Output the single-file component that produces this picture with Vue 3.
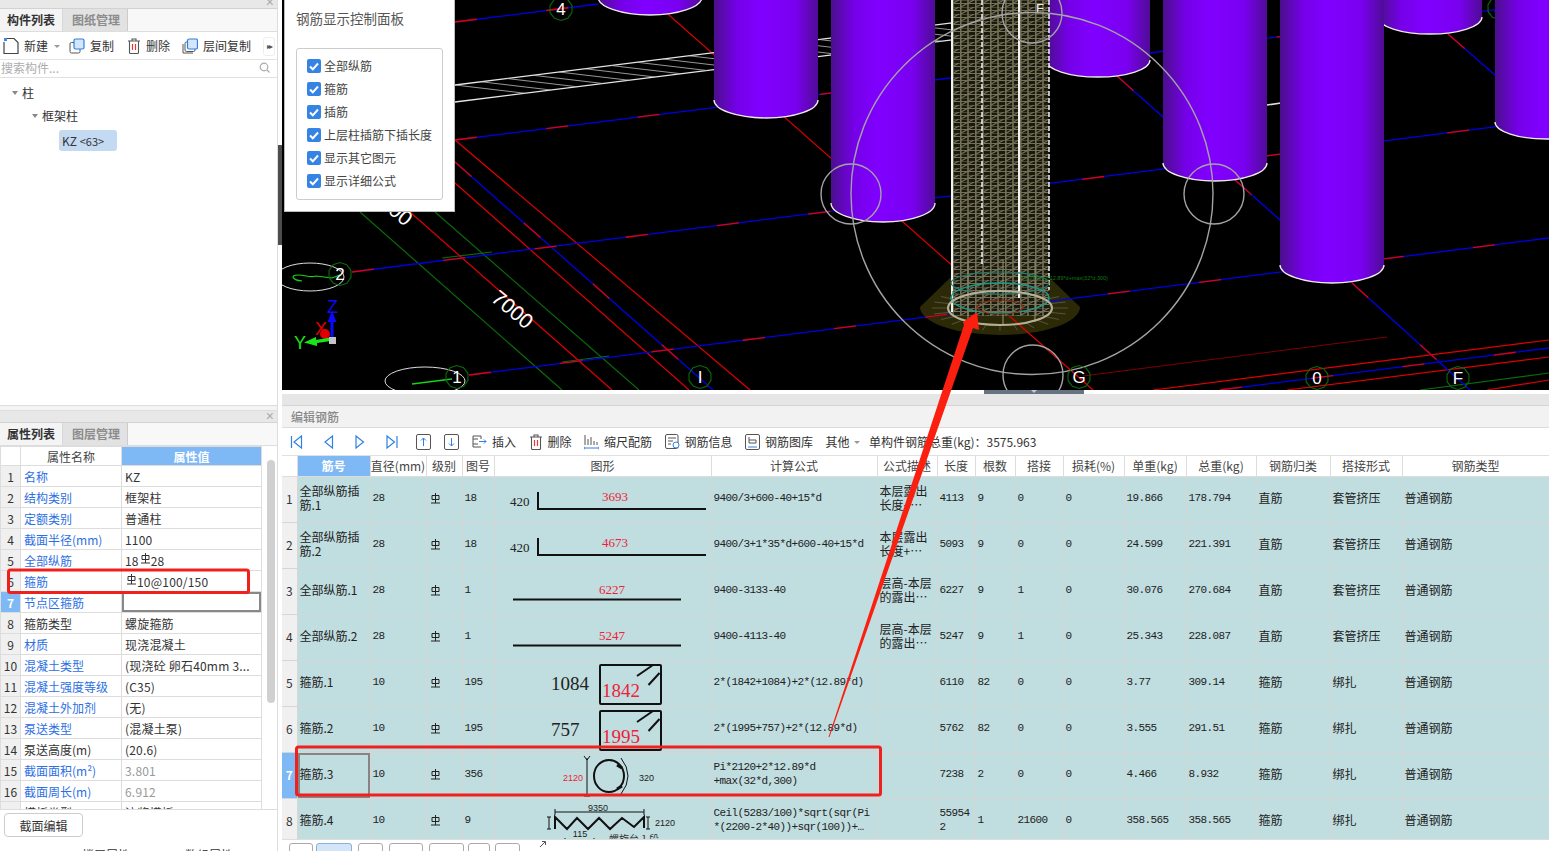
<script setup>
// GCL rebar view: component tree + properties on the left, 3D view + rebar table on the right.
const slope = -0.125;

const mixedLines = [
  [455, 22, 598, 4],
  [455, 140, 1549, 3],
  [352, 272, 1549, 120],
  [469, 375, 1549, 238],
  [1220, 390, 1549, 348],
  [455, 162, 713, 390],
  [1117, 76, 1163, 117],
  [1235, 180, 1280, 220],
  [1352, 283, 1470, 390],
  [1448, 34, 1495, 75],
];
const redLines = [
  [652, 0, 1093, 390],
  [455, 140, 750, 390],
  [455, 183, 689, 390],
  [410, 212, 612, 390],
  [1153, 390, 1549, 340],
  [1287, 390, 1549, 357],
  [1487, 390, 1549, 380],
];
const greenLines = [
  [360, 212, 562, 390],
  [435, 212, 639, 390],
  [1420, 390, 1549, 373],
  [442, 258, 492, 252],
  [562, 362, 609, 356],
];

// hatch between the two slab edges
const slabUpper = (x) => 85 + slope * (x - 455);
const slabLower = (x) => 102 + slope * (x - 455);
const slabHatch = [];
for (let x = 455; x < 1000; x += 26) {
  slabHatch.push([x, slabUpper(x), x + 70, slabLower(x + 70)]);
}

// rear columns first so the nearer ones cover them
const columns = [
  { cx: 650, cy: -3, ry: 18 },
  { cx: 766, cy: 100, ry: 18 },
  { cx: 883, cy: 203, ry: 19 },
  { cx: 1098, cy: 60, ry: 17 },
  { cx: 1430, cy: 17, ry: 17 },
  { cx: 1215, cy: 163, ry: 18 },
  { cx: 1332, cy: 265, ry: 18 },
  { cx: 1547, cy: 122, ry: 17 },
];
const columnPath = (c) =>
  `M${c.cx - 52} -30V${c.cy}A52 ${c.ry} 0 0 0 ${c.cx + 52} ${c.cy}V-30Z`;
const columnEdge = (c) =>
  `M${c.cx - 52} ${c.cy}A52 ${c.ry} 0 0 0 ${c.cx + 52} ${c.cy}`;

function decagon(cx, cy, r) {
  const pts = [];
  for (let i = 0; i < 10; i++) {
    const a = (Math.PI * 2 * i) / 10 + 0.3;
    pts.push(`${(cx + r * Math.cos(a)).toFixed(1)},${(cy + r * Math.sin(a)).toFixed(1)}`);
  }
  return pts.join(" ");
}
const bubbles = [
  { t: "4", x: 561, y: 9 },
  { t: "2", x: 340, y: 274 },
  { t: "1", x: 457, y: 377 },
  { t: "I", x: 700, y: 377 },
  { t: "G", x: 1079, y: 377 },
  { t: "0", x: 1317, y: 378 },
  { t: "F", x: 1458, y: 378 },
];
const radials = [];
for (let i = 0; i < 24; i++) {
  const a = (Math.PI * 2 * i) / 24;
  radials.push([
    1000 + 52 * Math.cos(a),
    308 + 17 * Math.sin(a),
    1000 + 68 * Math.cos(a),
    308 + 23 * Math.sin(a),
  ]);
}

const checks = ["全部纵筋", "箍筋", "插筋", "上层柱插筋下插长度", "显示其它图元", "显示详细公式"];

const props = [
  { name: "名称", value: "KZ", link: true },
  { name: "结构类别", value: "框架柱", link: true },
  { name: "定额类别", value: "普通柱", link: true },
  { name: "截面半径(mm)", value: "1100", link: true },
  { name: "全部纵筋", pre: "18", grade: true, value: "28", link: true },
  { name: "箍筋", grade: true, value: "10@100/150", link: true },
  { name: "节点区箍筋", value: "", link: true, active: true },
  { name: "箍筋类型", value: "螺旋箍筋" },
  { name: "材质", value: "现浇混凝土", link: true },
  { name: "混凝土类型", value: "(现浇砼 卵石40mm 3...", link: true },
  { name: "混凝土强度等级", value: "(C35)", link: true },
  { name: "混凝土外加剂", value: "(无)", link: true },
  { name: "泵送类型", value: "(混凝土泵)", link: true },
  { name: "泵送高度(m)", value: "(20.6)" },
  { name: "截面面积(m²)", value: "3.801", link: true, muted: true },
  { name: "截面周长(m)", value: "6.912", link: true, muted: true },
  { name: "模板类型", value: "流浆模板" },
];

const heads = ["直径(mm)", "级别", "图号", "图形", "计算公式", "公式描述", "长度", "根数", "搭接", "损耗(%)", "单重(kg)", "总重(kg)", "钢筋归类", "搭接形式", "钢筋类型"];
const colWidths = [15, 73, 56, 36, 32, 217, 166, 60, 38, 40, 48, 61, 62, 70, 74, 72, 147];

const bars = [
  { name: "全部纵筋插筋.1", d: 28, fig: 18, shape: "hook", dim: "420", red: "3693", formula: ["9400/3+600-40+15*d"], desc: ["本层露出", "长度+…"], len: 4113, n: 9, lap: 0, unit: "19.866", total: "178.794", cat: "直筋", join: "套管挤压" },
  { name: "全部纵筋插筋.2", d: 28, fig: 18, shape: "hook", dim: "420", red: "4673", formula: ["9400/3+1*35*d+600-40+15*d"], desc: ["本层露出", "长度+…"], len: 5093, n: 9, lap: 0, unit: "24.599", total: "221.391", cat: "直筋", join: "套管挤压" },
  { name: "全部纵筋.1", d: 28, fig: 1, shape: "line", red: "6227", formula: ["9400-3133-40"], desc: ["层高-本层", "的露出…"], len: 6227, n: 9, lap: 1, unit: "30.076", total: "270.684", cat: "直筋", join: "套管挤压" },
  { name: "全部纵筋.2", d: 28, fig: 1, shape: "line", red: "5247", formula: ["9400-4113-40"], desc: ["层高-本层", "的露出…"], len: 5247, n: 9, lap: 1, unit: "25.343", total: "228.087", cat: "直筋", join: "套管挤压" },
  { name: "箍筋.1", d: 10, fig: 195, shape: "stirrup", dim: "1084", red: "1842", formula: ["2*(1842+1084)+2*(12.89*d)"], desc: [], len: 6110, n: 82, lap: 0, unit: "3.77", total: "309.14", cat: "箍筋", join: "绑扎" },
  { name: "箍筋.2", d: 10, fig: 195, shape: "stirrup", dim: "757", red: "1995", formula: ["2*(1995+757)+2*(12.89*d)"], desc: [], len: 5762, n: 82, lap: 0, unit: "3.555", total: "291.51", cat: "箍筋", join: "绑扎" },
  { name: "箍筋.3", d: 10, fig: 356, shape: "spiral", formula: ["Pi*2120+2*12.89*d", "+max(32*d,300)"], desc: [], len: 7238, n: 2, lap: 0, unit: "4.466", total: "8.932", cat: "箍筋", join: "绑扎", active: true },
  { name: "箍筋.4", d: 10, fig: 9, shape: "zigzag", formula: ["Ceil(5283/100)*sqrt(sqr(Pi", "*(2200-2*40))+sqr(100))+…"], desc: [], len: 559542, n: 1, lap: 21600, unit: "358.565", total: "358.565", cat: "箍筋", join: "绑扎" },
];
</script>

<template>
  <div class="app">
    <aside class="side">
      <section class="panel tree-panel">
        <div class="strip"><span class="close">×</span></div>
        <div class="tabs">
          <span class="tab on">构件列表</span>
          <span class="tab">图纸管理</span>
        </div>
        <div class="side-tools">
          <span class="st st-new">
            <svg width="16" height="18" viewBox="0 0 16 18"><path d="M1 5V16.5H15V5.5L11 1.5H4" fill="#fff" stroke="#444" stroke-width="1.2" /><path d="M1 1h3v3H1z" fill="#3a8be8" /></svg>
            新建<i class="caret"></i>
          </span>
          <span class="st st-copy">
            <svg width="16" height="16" viewBox="0 0 16 16"><rect x="1" y="4.5" width="10" height="10.5" rx="1.5" fill="#fff" stroke="#555" /><rect x="5" y="1" width="10" height="10" rx="1.5" fill="#d3e6fb" stroke="#2f80e0" stroke-width="1.2" /></svg>
            复制
          </span>
          <span class="st st-del">
            <svg width="14" height="16" viewBox="0 0 14 16"><path d="M1 3h12M5 3V1h4v2M2.5 3v11.5a1 1 0 0 0 1 1h7a1 1 0 0 0 1-1V3" fill="none" stroke="#555" stroke-width="1.1" /><path d="M5.5 6v6M8.5 6v6" stroke="#e33" stroke-width="1.2" /></svg>
            删除
          </span>
          <span class="st st-floor">
            <svg width="16" height="16" viewBox="0 0 16 16"><path d="M1 6v9h10" fill="none" stroke="#555" /><rect x="3" y="4" width="10" height="9.5" rx="1.5" fill="#fff" stroke="#555" /><rect x="5.5" y="1" width="10" height="10" rx="1.5" fill="#d3e6fb" stroke="#2f80e0" stroke-width="1.2" /></svg>
            层间复制
          </span>
          <span class="more">▸▸</span>
        </div>
        <div class="search">
          <span>搜索构件...</span>
          <svg width="11" height="11" viewBox="0 0 11 11"><circle cx="5" cy="5" r="3.8" fill="none" stroke="#aaa" stroke-width="1.2" /><path d="M8 8l2.5 2.5" stroke="#aaa" stroke-width="1.2" /></svg>
        </div>
        <div class="tree">
          <div class="node lv1"><i class="tri"></i>柱</div>
          <div class="node lv2"><i class="tri"></i>框架柱</div>
          <div class="pill">KZ <small>&lt;63&gt;</small></div>
        </div>
      </section>

      <div class="side-gap"></div>

      <section class="panel prop-panel">
        <div class="strip"><span class="close">×</span></div>
        <div class="tabs">
          <span class="tab on">属性列表</span>
          <span class="tab">图层管理</span>
        </div>
        <div class="prop-body">
          <table class="prop-table">
            <colgroup><col class="c-i" /><col class="c-n" /><col class="c-v" /></colgroup>
            <thead>
              <tr><th></th><th>属性名称</th><th class="blue">属性值</th></tr>
            </thead>
            <tbody>
              <tr v-for="(p, i) in props" :key="p.name">
                <td class="idx" :class="{ act: p.active }">{{ i + 1 }}</td>
                <td class="pname" :class="{ link: p.link }">{{ p.name }}</td>
                <td class="pval" :class="{ muted: p.muted, editing: p.active }">
                  {{ p.pre }}<svg v-if="p.grade" class="grade up" viewBox="0 0 9 11"><path d="M1 2.5h7v4H1zM4.5 0v10M0 10h9" fill="none" stroke="currentColor" stroke-width="1" /></svg>{{ p.value }}
                </td>
              </tr>
            </tbody>
          </table>
          <div class="scroll"><div class="thumb"></div></div>
        </div>
        <div class="prop-foot">
          <button class="edit-btn">截面编辑</button>
          <div class="clipped"><span>楼层属性</span><span>数组属性</span></div>
        </div>
      </section>
    </aside>

    <div class="sash"><div class="sash-thumb"></div></div>

    <main class="main">
      <div class="view">
        <svg class="scene" viewBox="282 0 1267 390" width="1267" height="390">
          <defs>
            <linearGradient id="cyl" x1="0" x2="1" y1="0" y2="0">
              <stop offset="0" stop-color="#4a0f8c" />
              <stop offset="0.22" stop-color="#7500e8" />
              <stop offset="0.45" stop-color="#8000ff" />
              <stop offset="0.78" stop-color="#7a00f0" />
              <stop offset="1" stop-color="#4f0c96" />
            </linearGradient>
            <pattern id="cage" width="15" height="7" patternUnits="userSpaceOnUse">
              <rect width="15" height="7" fill="#1a190f" />
              <path d="M0 0h15M0 3.5h15" stroke="#757156" stroke-width="1" />
              <path d="M1 7L14 0" stroke="#757156" stroke-width="1.2" />
              <path d="M0.8 0v7M8 0v7" stroke="#757156" stroke-width="1.6" />
            </pattern>
          </defs>

          <path d="M950 278H1050L1080 307A80 28 0 0 1 920 307Z" fill="#2c2a06" />

          <line v-for="(l, i) in greenLines" :key="'g' + i" :x1="l[0]" :y1="l[1]" :x2="l[2]" :y2="l[3]" stroke="#0a6b0a" stroke-width="1.2" />
          <line v-for="(l, i) in redLines" :key="'r' + i" :x1="l[0]" :y1="l[1]" :x2="l[2]" :y2="l[3]" stroke="#e00000" stroke-width="1.2" />
          <line x1="1083" y1="376" x2="1387" y2="337" stroke="#7a0000" stroke-width="1.2" />
          <line v-for="(l, i) in mixedLines" :key="'b' + i" :x1="l[0]" :y1="l[1]" :x2="l[2]" :y2="l[3]" stroke="#0000e6" stroke-width="1.3" />
          <line v-for="(l, i) in mixedLines" :key="'m' + i" :x1="l[0]" :y1="l[1]" :x2="l[2]" :y2="l[3]" stroke="#e00000" stroke-width="1.3" stroke-dasharray="22 70" />

          <line x1="455" :y1="slabUpper(455)" x2="1050" :y2="slabUpper(1050)" stroke="#e6e6e6" stroke-width="1.4" />
          <line x1="455" :y1="slabLower(455)" x2="1050" :y2="slabLower(1050)" stroke="#e6e6e6" stroke-width="1.4" />
          <line v-for="(l, i) in slabHatch" :key="'h' + i" :x1="l[0]" :y1="l[1]" :x2="l[2]" :y2="l[3]" stroke="#bdbdbd" stroke-width="0.8" />
          <line x1="1267" y1="105" x2="1281" y2="103" stroke="#ddd" stroke-width="1.6" />

          <!-- this bubble sits behind the far right column -->
          <polygon :points="decagon(1499, 8, 11.5)" fill="none" stroke="#0b6b0b" stroke-width="1.1" />
          <text x="1499" y="14" class="bubble">3</text>

          <g v-for="(c, i) in columns" :key="'c' + i">
            <path :d="columnPath(c)" fill="url(#cyl)" />
            <path :d="columnEdge(c)" fill="none" stroke="#eee" stroke-width="1.3" />
          </g>

          <rect x="952" y="-2" width="97" height="318" fill="url(#cage)" />
          <path d="M952 0V312M1019 0V298" stroke="#f2f2f2" stroke-width="2" />
          <path d="M982 0V264M1049 0V290" stroke="#f2f2f2" stroke-width="1.5" stroke-dasharray="5 2" />
          <path d="M968 260V326M1003 260V325M1035 260V322" stroke="#8a8668" stroke-width="1.2" />
          <text x="1036" y="13" class="mini">F</text>

          <line v-for="(l, i) in radials" :key="'t' + i" :x1="l[0]" :y1="l[1]" :x2="l[2]" :y2="l[3]" stroke="#55533f" stroke-width="1" />
          <ellipse cx="1000" cy="283" rx="49" ry="11" fill="none" stroke="#1b7f70" stroke-width="1.2" />
          <ellipse cx="1000" cy="298" rx="49" ry="15" fill="none" stroke="#1f9a86" stroke-width="1.4" />
          <ellipse cx="1000" cy="307" rx="23" ry="7" fill="none" stroke="#8a2a0a" stroke-width="1.2" />
          <ellipse cx="1000" cy="308" rx="52" ry="17" fill="none" stroke="#b5b199" stroke-width="2" />
          <text x="1022" y="280" class="tiny">Pi*2120+2*12.89*d+max(32*d,300)</text>

          <g fill="none" stroke="#a3a3a3" stroke-width="1.4">
            <circle cx="1032" cy="193.5" r="181" />
            <circle cx="851" cy="194" r="30" />
            <circle cx="1214" cy="194" r="30" />
            <circle cx="1032" cy="13" r="30" />
            <circle cx="1033" cy="375" r="30" />
          </g>

          <ellipse cx="310" cy="277" rx="34" ry="14" fill="none" stroke="#ddd" />
          <ellipse cx="425" cy="381" rx="40" ry="14" fill="none" stroke="#ddd" />
          <path d="M302 281C292 280 290 275 298 275C306 275 310 278 316 276L332 278L340 275" fill="none" stroke="#19d219" stroke-width="1.2" />
          <path d="M412 384L452 379" stroke="#19d219" stroke-width="1.5" />

          <g v-for="b in bubbles" :key="b.t">
            <polygon :points="decagon(b.x, b.y, 11.5)" fill="none" stroke="#0b6b0b" stroke-width="1.1" />
            <text :x="b.x" :y="b.y + 6" class="bubble">{{ b.t }}</text>
          </g>
          <text class="dim" transform="translate(490 300) rotate(40)">7000</text>
          <text class="dim" transform="translate(387 212) rotate(40)">00</text>

          <text x="327" y="313" class="axis" fill="#0a0aff">Z</text>
          <text x="315" y="335" class="axis" fill="#e00000">X</text>
          <text x="294" y="349" class="axis" fill="#19e619">Y</text>
          <path d="M330.5 337V322H327.5L332 311L336.5 322H333.5V337Z" fill="#0a0aff" />
          <circle cx="325" cy="334" r="5" fill="#e00000" />
          <path d="M330 337.5L316 340V337L304 342.5L317 346V343L331 341Z" fill="#19e619" />
          <rect x="329" y="337" width="7" height="7" fill="#c4c4c4" />
        </svg>

        <div class="rebar-panel">
          <div class="rp-title">钢筋显示控制面板</div>
          <div class="rp-box">
            <label v-for="c in checks" :key="c" class="rp-row">
              <svg width="14" height="14" viewBox="0 0 14 14"><rect width="14" height="14" rx="2" fill="#3584e4" /><path d="M3 7.5l2.8 2.8L11 4.5" fill="none" stroke="#fff" stroke-width="2" /></svg>
              {{ c }}
            </label>
          </div>
        </div>
      </div>

      <div class="hsash"><div class="hsash-thumb"><i></i></div></div>
      <div class="band"></div>
      <div class="edit-title">编辑钢筋</div>

      <div class="edit-tools">
        <span class="nav-group">
          <svg class="nav" viewBox="0 0 31 16"><path d="M3.500 2v12M13.500 2L6 8L13.500 14Z" fill="none" stroke="#2f80e0" stroke-width="1.2" /></svg>
          <svg class="nav" viewBox="0 0 31 16"><path d="M13.500 2L6 8L13.500 14Z" fill="none" stroke="#2f80e0" stroke-width="1.2" /></svg>
          <svg class="nav" viewBox="0 0 31 16"><path d="M6 2L13.500 8L6 14Z" fill="none" stroke="#2f80e0" stroke-width="1.2" /></svg>
          <svg class="nav" viewBox="0 0 31 16"><path d="M6 2L13.500 8L6 14ZM16 2v12" fill="none" stroke="#2f80e0" stroke-width="1.2" /></svg>
        </span>
        <svg class="box-btn" width="15" height="16" viewBox="0 0 15 16"><rect x="0.5" y="0.5" width="14" height="15" rx="1.5" fill="none" stroke="#555" /><path d="M7.5 12V4M5 6.5L7.5 4L10 6.5" fill="none" stroke="#2f80e0" /></svg>
        <svg class="box-btn" width="15" height="16" viewBox="0 0 15 16"><rect x="0.5" y="0.5" width="14" height="15" rx="1.5" fill="none" stroke="#555" /><path d="M7.5 4V12M5 9.5L7.5 12L10 9.5" fill="none" stroke="#2f80e0" /></svg>
        <span class="et ins">
          <svg width="15" height="14" viewBox="0 0 15 14"><path d="M1 1h8v3M1 1v11h8M1 4h5M1 9h5" fill="none" stroke="#555" /><path d="M7 6.500h7M12 4.500l2 2-2 2" fill="none" stroke="#2f80e0" /></svg>
          插入
        </span>
        <span class="et">
          <svg width="14" height="16" viewBox="0 0 14 16"><path d="M1 3h12M5 3V1h4v2M2.5 3v11.5a1 1 0 0 0 1 1h7a1 1 0 0 0 1-1V3" fill="none" stroke="#555" stroke-width="1.1" /><path d="M5.5 6v6M8.5 6v6" stroke="#e33" stroke-width="1.2" /></svg>
          删除
        </span>
        <span class="et">
          <svg width="15" height="16" viewBox="0 0 15 16"><path d="M1 1v10M4 5v6M7 3v8M10 7v4M13 8v3" stroke="#555" /><path d="M0 14h15M0 12.5v3M15 12.5v3" fill="none" stroke="#2f80e0" /></svg>
          缩尺配筋
        </span>
        <span class="et">
          <svg width="15" height="16" viewBox="0 0 15 16"><rect x="0.5" y="0.5" width="12.5" height="14" rx="1.5" fill="none" stroke="#555" /><path d="M3 4h8M3 7h5M3 10h3" stroke="#555" /><circle cx="11" cy="11" r="3" fill="#fff" stroke="#2f80e0" /></svg>
          钢筋信息
        </span>
        <span class="et">
          <svg width="15" height="16" viewBox="0 0 15 16"><rect x="0.5" y="0.5" width="14" height="15" rx="1.5" fill="none" stroke="#555" /><path d="M4 3v6h7V6H4" fill="none" stroke="#555" /><path d="M3 13h9" stroke="#2f80e0" /></svg>
          钢筋图库
        </span>
        <span class="et other">其他<i class="caret"></i></span>
        <span class="et weight">单构件钢筋总重(kg)：3575.963</span>
      </div>

      <div class="bars-wrap">
        <table class="bars">
          <colgroup><col v-for="(w, i) in colWidths" :key="i" :width="w" /></colgroup>
          <thead>
            <tr>
              <th></th>
              <th class="blue">筋号</th>
              <th v-for="h in heads" :key="h">{{ h }}</th>
            </tr>
          </thead>
          <tbody>
            <tr v-for="(b, i) in bars" :key="b.name">
              <td class="idx" :class="{ act: b.active }">{{ i + 1 }}</td>
              <td class="cn" :class="{ sel: b.active }">{{ b.name }}</td>
              <td class="mono">{{ b.d }}</td>
              <td class="mid"><svg class="grade" viewBox="0 0 9 11"><path d="M1 2.5h7v4H1zM4.5 0v10M0 10h9" fill="none" stroke="currentColor" stroke-width="1" /></svg></td>
              <td class="mono">{{ b.fig }}</td>
              <td class="shape">
                <svg v-if="b.shape === 'hook'" viewBox="0 0 217 45" width="217" height="45">
                  <text x="16" y="29" class="sf sf13">{{ b.dim }}</text>
                  <path d="M44 15V32H212" fill="none" stroke="#111" stroke-width="2" />
                  <text x="121" y="24" class="sf sf13 red mid-a">{{ b.red }}</text>
                </svg>
                <svg v-else-if="b.shape === 'line'" viewBox="0 0 217 45" width="217" height="45">
                  <path d="M19 30.5H187" stroke="#111" stroke-width="2" />
                  <text x="118" y="25" class="sf sf13 red mid-a">{{ b.red }}</text>
                </svg>
                <svg v-else-if="b.shape === 'stirrup'" viewBox="0 0 217 45" width="217" height="45">
                  <text x="57" y="29" class="sf sf19">{{ b.dim }}</text>
                  <rect x="106" y="4" width="61" height="39" rx="1" fill="none" stroke="#111" stroke-width="2" />
                  <path d="M143 15L159 4M154.500 24L165.500 12" stroke="#111" stroke-width="2" />
                  <text x="108" y="36" class="sf sf19 red">{{ b.red }}</text>
                </svg>
                <svg v-else-if="b.shape === 'spiral'" viewBox="0 0 217 45" width="217" height="45">
                  <text x="69" y="28" class="small red">2120</text>
                  <path d="M93 5V43M90 3l3 4 3-4M90 43h6" fill="none" stroke="#111" />
                  <ellipse cx="115" cy="23" rx="15" ry="16" fill="none" stroke="#111" stroke-width="2" />
                  <path d="M127 5Q141 23 127 41" fill="none" stroke="#111" />
                  <path d="M123 12l5 3M123 36l5-3" stroke="#111" stroke-width="3" />
                  <text x="145" y="28" class="small">320</text>
                </svg>
                <svg v-else viewBox="0 0 217 45" width="217" height="45">
                  <text x="104" y="12" class="small mid-a">9350</text>
                  <path d="M61 13H150M61 10v6M150 10v6" fill="none" stroke="#111" />
                  <path d="M61 30V18L73 30L83 19L94 30L105 19L116 30L128 19L140 28L150 18V29" fill="none" stroke="#111" stroke-width="2" />
                  <path d="M55 18V30M53 18h4M53 30h4M154 18V30M152 18h4M152 30h4" fill="none" stroke="#111" />
                  <text x="161" y="27" class="small">2120</text>
                  <text x="86" y="38" class="small mid-a">115</text>
                  <path d="M71 39v6M100 39v6" stroke="#111" />
                  <text x="115" y="44" class="small-cn">螺旋台 1 段</text>
                </svg>
              </td>
              <td class="mono"><span v-for="f in b.formula" :key="f" class="line">{{ f }}</span></td>
              <td class="cn"><span v-for="d in b.desc" :key="d" class="line">{{ d }}</span></td>
              <td class="mono wrap">{{ b.len }}</td>
              <td class="mono">{{ b.n }}</td>
              <td class="mono">{{ b.lap }}</td>
              <td class="mono">0</td>
              <td class="mono">{{ b.unit }}</td>
              <td class="mono">{{ b.total }}</td>
              <td class="cn">{{ b.cat }}</td>
              <td class="cn">{{ b.join }}</td>
              <td class="cn">普通钢筋</td>
            </tr>
          </tbody>
        </table>
      </div>

      <div class="bottom-bar">
        <span class="bb w24"></span>
        <span class="bb w36 on"></span>
        <span class="bb w25"></span>
        <span class="bb w34"></span>
        <span class="bb w35"></span>
        <span class="bb w22"></span>
        <span class="bb w25 last"></span>
        <svg class="pop" width="7" height="8" viewBox="0 0 7 8"><path d="M1 7L6 2M3 1.500h3.500V5" fill="none" stroke="#555" /></svg>
      </div>
    </main>

    <!-- hand-drawn red annotations on top of everything -->
    <svg class="marks" viewBox="0 0 1549 851" width="1549" height="851">
      <rect x="8.500" y="570" width="240" height="22.500" rx="2" fill="none" stroke="#f0201c" stroke-width="3" />
      <rect x="296.500" y="747" width="584" height="48" rx="2" fill="none" stroke="#f0201c" stroke-width="3" />
      <polygon points="977,312 979,330 973,328 829.500,737 828.500,737 964,325 963,322" fill="#fb1f10" />
    </svg>
  </div>
</template>

<style>
html,
body {
  margin: 0;
  background: #fff;
  overflow: hidden;
}
</style>

<style scoped>
.app {
  position: relative;
  display: flex;
  width: 1549px;
  height: 851px;
  overflow: hidden;
  font-family: "Noto Sans CJK SC", "Noto Sans", sans-serif;
  font-size: 12px;
  color: #333;
  background: #fff;
}

/* left column */
.side {
  width: 278px;
  flex: none;
  display: flex;
  flex-direction: column;
  border-right: 1px solid #ddd;
  box-sizing: border-box;
}
.tree-panel {
  height: 406px;
  border-bottom: 1px solid #ddd;
  box-sizing: border-box;
}
.side-gap {
  height: 4px;
  background: #f4f4f4;
  border-bottom: 1px solid #ddd;
}
.prop-panel {
  flex: 1;
  display: flex;
  flex-direction: column;
  min-height: 0;
}
.strip {
  height: 8px;
  background: #e8e8e8;
  border-bottom: 1px solid #d2d2d2;
  position: relative;
  overflow: hidden;
}
.prop-panel .strip {
  height: 11px;
}
.close {
  position: absolute;
  right: 3px;
  top: -5px;
  font: 14px/14px "Liberation Sans", sans-serif;
  color: #aaa;
}
.prop-panel .close {
  top: -2px;
}
.tabs {
  display: flex;
  height: 22px;
  border-bottom: 1px solid #ddd;
  background: #f8f8f8;
}
.tab {
  width: 65px;
  padding-left: 9px;
  box-sizing: border-box;
  line-height: 22px;
  font-weight: 700;
  color: #8c8c8c;
  background: #e2e2e2;
  border-right: 1px solid #ccc;
}
.tab.on {
  width: 63px;
  padding-left: 7px;
  color: #333;
  background: #f4f4f4;
  border-right: 1px solid #d8d8d8;
}
.side-tools {
  position: relative;
  display: flex;
  align-items: center;
  height: 27px;
  border-bottom: 1px solid #e4e4e4;
  padding-left: 3px;
}
.st {
  display: flex;
  align-items: center;
  gap: 5px;
  margin-right: 12px;
}
.st-new {
  margin-right: 9px;
}
.st-copy {
  margin-right: 13px;
}
.caret {
  display: inline-block;
  margin-left: 1px;
  border: 3px solid transparent;
  border-top: 3px solid #999;
  transform: translateY(2px);
}
.more {
  position: absolute;
  right: 2px;
  top: 5px;
  width: 10px;
  height: 17px;
  border-radius: 3px;
  border: 1px solid #eee;
  font: 8px/17px "DejaVu Sans", sans-serif;
  color: #555;
  text-align: center;
  letter-spacing: -2px;
}
.search {
  display: flex;
  align-items: center;
  justify-content: space-between;
  height: 18px;
  padding: 0 7px 2px 1px;
  box-sizing: border-box;
  color: #adadad;
  border-bottom: 1px solid #e0e0e0;
}
.tree {
  padding-top: 3px;
}
.node {
  display: flex;
  align-items: center;
  height: 23px;
}
.lv1 {
  padding-left: 12px;
}
.lv2 {
  padding-left: 32px;
}
.tri {
  border: 3px solid transparent;
  border-top: 4px solid #888;
  border-bottom: 0;
  margin-right: 4px;
}
.pill {
  width: 58px;
  height: 21px;
  margin: 3px 0 0 59px;
  box-sizing: border-box;
  padding-left: 3px;
  line-height: 21px;
  border-radius: 3px;
  background: #c4daf2;
}
.pill small {
  font-size: 11px;
}

.prop-body {
  display: flex;
  height: 363px;
  overflow: hidden;
  border-bottom: 1px solid #ddd;
}
.prop-table {
  width: 261px;
  flex: none;
  table-layout: fixed;
  border-collapse: collapse;
  align-self: flex-start;
}
.c-i {
  width: 20px;
}
.c-n {
  width: 101px;
}
.c-v {
  width: 140px;
}
.prop-table th {
  height: 18px;
  padding: 0;
  font-weight: 400;
  color: #444;
  border: 1px solid #ddd;
}
.prop-table td {
  height: 20px;
  padding: 0 3px;
  border: 1px solid #ddd;
  white-space: nowrap;
  overflow: hidden;
}
.pval {
  letter-spacing: 0.2px;
}
th.blue {
  background: #7eb8f5;
  color: #fff !important;
  font-weight: 700 !important;
}
.prop-table td.idx,
.bars td.idx {
  padding: 0;
  text-align: center;
  background: #f0f0f0;
}
td.idx.act {
  background: #7eb8f5 !important;
  color: #fff;
  font-weight: 700;
}
.link {
  color: #2d6fe3;
}
.muted {
  color: #999;
}
.prop-table td.editing {
  box-shadow: inset 0 0 0 2px #888;
}
.grade {
  display: inline-block;
  width: 9px;
  height: 11px;
  vertical-align: -1px;
}
.grade.up {
  vertical-align: 2px;
  margin: 0 1px 0 2px;
}
.scroll {
  width: 8px;
  margin-left: 5px;
}
.thumb {
  margin-top: 14px;
  height: 243px;
  border-radius: 4px;
  background: #d0d0d0;
}
.prop-foot {
  flex: 1;
  overflow: hidden;
}
.edit-btn {
  display: block;
  width: 79px;
  height: 24px;
  margin: 3px 0 1px 4px;
  padding: 0;
  background: #fff;
  border: 1px solid #ccc;
  border-radius: 4px;
  font: 12px "Noto Sans CJK SC", sans-serif;
  color: #333;
}
.clipped {
  display: flex;
  gap: 55px;
  padding: 11px 0 0 82px;
  line-height: 12px;
}

.sash {
  width: 4px;
  flex: none;
  background: #fff;
}
.sash-thumb {
  height: 100px;
  margin-top: 145px;
  background: #4d4d4d;
}

/* right column */
.main {
  flex: 1;
  min-width: 0;
  display: flex;
  flex-direction: column;
}
.view {
  position: relative;
  height: 390px;
  flex: none;
  overflow: hidden;
  background: #000;
}
.scene {
  display: block;
}
.tiny {
  font: 5.5px "Liberation Sans", sans-serif;
  fill: #0f7a0f;
}
.mini {
  font: 13px "Liberation Sans", sans-serif;
  fill: #eee;
}
.bubble {
  font: 17px "Liberation Sans", sans-serif;
  fill: #fff;
  text-anchor: middle;
}
.dim {
  font: 21px "Liberation Sans", sans-serif;
  fill: #fff;
}
.axis {
  font: 18px "Liberation Sans", sans-serif;
}
.rebar-panel {
  position: absolute;
  left: 2px;
  top: -1px;
  width: 171px;
  height: 213px;
  box-sizing: border-box;
  padding: 9px 11px 0 11px;
  background: #fff;
  border: 1px solid #bbb;
  border-top: 0;
}
.rp-title {
  font-size: 13.500px;
  line-height: 20px;
  color: #555;
}
.rp-box {
  margin-top: 20px;
  height: 152px;
  box-sizing: border-box;
  padding: 5px 10px;
  border: 1px solid #ccc;
  border-radius: 3px;
}
.rp-row {
  display: flex;
  align-items: center;
  gap: 3px;
  height: 23px;
  white-space: nowrap;
  color: #444;
}
.hsash {
  height: 4px;
  flex: none;
  background: #fff;
  position: relative;
}
.hsash-thumb {
  position: absolute;
  left: 702px;
  top: 0;
  width: 100px;
  height: 4px;
  background: #667380;
}
.hsash-thumb i {
  position: absolute;
  left: 47px;
  top: 0;
  border: 3px solid transparent;
  border-top: 3px solid #c8c8c8;
}
.band {
  height: 11px;
  flex: none;
  background: #e6e6e6;
  border-bottom: 1px solid #d4d4d4;
}
.edit-title {
  height: 21px;
  flex: none;
  padding-left: 9px;
  line-height: 21px;
  color: #888;
  font-weight: 500;
  background: #f2f2f2;
  border-bottom: 1px solid #dcdcdc;
}
.edit-tools {
  display: flex;
  align-items: center;
  gap: 12.5px;
  height: 27px;
  flex: none;
  padding-left: 6px;
  border-bottom: 1px solid #e0e0e0;
  white-space: nowrap;
}
.nav-group {
  display: flex;
  margin-right: -8.5px;
}
.nav {
  width: 31px;
  height: 16px;
  display: block;
}
.et {
  display: flex;
  align-items: center;
  gap: 5px;
}
.ins {
  margin-left: 1px;
}
.other {
  gap: 3px;
}
.weight {
  margin-left: -3px;
}

.bars-wrap {
  height: 383px;
  flex: none;
  overflow: hidden;
  border-bottom: 1px solid #ddd;
}
.bars {
  width: 1267px;
  table-layout: fixed;
  border-collapse: collapse;
}
.bars th {
  height: 20px;
  padding: 0 0 1px;
  box-sizing: border-box;
  font-weight: 400;
  color: #444;
  white-space: nowrap;
  overflow: hidden;
  border: 1px solid #ddd;
  border-top: 0;
  border-left: 0;
}
.bars td {
  height: 45px;
  box-sizing: border-box;
  padding: 0 3px 3px 2px;
  background: #c0dde0;
  border: 1px solid #d6d6d6;
  border-left: 0;
  overflow: hidden;
  line-height: 14px;
}
.bars td.sel {
  box-shadow: inset 0 0 0 2px #858585;
}
.mono {
  font-family: "Liberation Mono", monospace;
  font-size: 11px;
  letter-spacing: -0.6px;
  white-space: nowrap;
  color: #222;
}
.mono.wrap {
  white-space: normal;
  word-break: break-all;
}
.cn {
  color: #222;
}
.bars td.mid {
  color: #222;
  padding-left: 4px;
}
.line {
  display: block;
  white-space: nowrap;
  overflow: hidden;
}
.bars td.shape {
  padding: 0;
}
.shape svg {
  display: block;
  margin-left: -1px;
}
.sf {
  font-family: "Liberation Serif", serif;
  fill: #222;
}
.sf13 {
  font-size: 13px;
}
.sf19 {
  font-size: 19px;
}
.sf.red,
.small.red {
  fill: #ee2238;
}
.mid-a {
  text-anchor: middle;
}
.small {
  font: 9px "Liberation Sans", sans-serif;
  fill: #222;
}
.small-cn {
  font: 10px "Noto Sans CJK SC", sans-serif;
  fill: #333;
}

.bottom-bar {
  flex: 1;
  display: flex;
  gap: 6px;
  padding: 3px 0 0 7px;
  overflow: hidden;
}
.bb {
  height: 14px;
  box-sizing: border-box;
  border: 1px solid #aaa;
  border-radius: 3px;
  background: #fff;
  flex: none;
}
.bb.on {
  background: #d5e5f8;
  border-color: #8ab0e0;
  margin-left: -3px;
}
.w22 {
  width: 22px;
  margin-left: -2px;
}
.w24 {
  width: 24px;
}
.w25 {
  width: 25px;
}
.bb.last {
  margin-left: -1px;
}
.w34 {
  width: 34px;
}
.w35 {
  width: 35px;
}
.w36 {
  width: 36px;
}
.pop {
  margin-left: 13px;
  margin-top: -3px;
  flex: none;
}

.marks {
  position: absolute;
  left: 0;
  top: 0;
  pointer-events: none;
}
</style>
